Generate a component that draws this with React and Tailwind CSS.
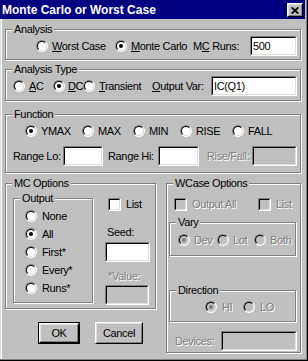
import React from "react";

function Radio({ checked, disabled }) {
  return (
    <span className="relative inline-block w-[12px] h-[12px] shrink-0 rounded-full border border-t-[#808080] border-l-[#808080] border-r-white border-b-white">
      <span
        className={
          disabled
            ? "absolute inset-0 rounded-full border border-t-black border-l-black border-r-[#dfdfdf] border-b-[#dfdfdf] bg-[#c0c0c0]"
            : "absolute inset-0 rounded-full border border-t-black border-l-black border-r-[#dfdfdf] border-b-[#dfdfdf] bg-white"
        }
      ></span>
      {checked && (
        <span
          className={
            disabled
              ? "absolute left-[3px] top-[3px] w-[4px] h-[4px] rounded-full bg-[#808080]"
              : "absolute left-[3px] top-[3px] w-[4px] h-[4px] rounded-full bg-black"
          }
        ></span>
      )}
    </span>
  );
}

function Check({ disabled }) {
  return (
    <span className="inline-block w-[13px] h-[13px] shrink-0 border border-t-[#808080] border-l-[#808080] border-r-white border-b-white">
      <span
        className={
          disabled
            ? "block w-full h-full border border-t-black border-l-black border-r-[#dfdfdf] border-b-[#dfdfdf] bg-[#c0c0c0]"
            : "block w-full h-full border border-t-black border-l-black border-r-[#dfdfdf] border-b-[#dfdfdf] bg-white"
        }
      ></span>
    </span>
  );
}

function Field({ className, value, disabled }) {
  return (
    <div
      className={
        "h-[20px] shrink-0 border border-t-[#808080] border-l-[#808080] border-r-white border-b-white " +
        className
      }
    >
      <div
        className={
          disabled
            ? "h-full border border-t-black border-l-black border-r-[#dfdfdf] border-b-[#dfdfdf] bg-[#c0c0c0]"
            : "h-full border border-t-black border-l-black border-r-[#dfdfdf] border-b-[#dfdfdf] bg-white pl-[1px] leading-[16px] whitespace-nowrap"
        }
      >
        {value}
      </div>
    </div>
  );
}

function Group({ label, className, children }) {
  return (
    <div
      className={
        "relative shrink-0 border border-[#808080] shadow-[1px_1px_0_#fff,inset_1px_1px_0_#fff] " +
        className
      }
    >
      <span className="absolute left-[6px] -top-[7px] px-[2px] bg-[#c0c0c0] leading-[13px] whitespace-nowrap">
        {label}
      </span>
      {children}
    </div>
  );
}

const dis = "text-[#808080] [text-shadow:1px_1px_0_#fff] whitespace-nowrap";

function Button({ children, isDefault, className }) {
  const inner = (
    <div className="h-full border border-t-white border-l-white border-r-black border-b-black">
      <div className="h-full flex items-center justify-center border border-t-[#dfdfdf] border-l-[#dfdfdf] border-r-[#808080] border-b-[#808080]">
        {children}
      </div>
    </div>
  );
  if (isDefault) {
    return <div className={"border border-black " + className}>{inner}</div>;
  }
  return <div className={className}>{inner}</div>;
}

export default function App() {
  return (
    <div className="w-[308px] h-[361px] overflow-hidden bg-[#c0c0c0] border-r border-b border-r-black border-b-black font-['Liberation_Sans',Arial,sans-serif] text-[11px] tracking-[-0.35px] text-black leading-[13px]">
      <div className="h-full flex flex-col border-r border-b border-r-[#808080] border-b-[#808080]">
        <div className="h-[19px] mr-[1px] shrink-0 bg-[#000080] flex items-start justify-between pl-[2px] pr-[2px]">
          <span className="pt-[4px] text-white font-bold text-[12px] tracking-normal leading-[13px] whitespace-nowrap">
            Monte Carlo or Worst Case
          </span>
          <div className="mt-[3px] w-[16px] h-[14px] border border-t-white border-l-white border-r-black border-b-black">
            <div className="h-full flex items-center justify-center border border-t-[#dfdfdf] border-l-[#dfdfdf] border-r-[#808080] border-b-[#808080] bg-[#c0c0c0]">
              <svg width="8" height="7" viewBox="0 0 8 7">
                <path d="M0.6 0.4 L7.4 6.6 M7.4 0.4 L0.6 6.6" stroke="black" strokeWidth="1.8" />
              </svg>
            </div>
          </div>
        </div>

        <div className="flex-1 border-l border-l-[#dfdfdf]">
          <div className="h-full border-l border-l-white pl-[3px] flex flex-col">
            <Group label="Analysis" className="mt-[10px] w-[296px] h-[31px]">
              <div className="mt-[6px] h-[20px] pl-[30px] flex items-center">
                <div className="w-[79px] flex items-center">
                  <Radio />
                  <span className="ml-[4px] whitespace-nowrap">
                    <u>W</u>orst Case
                  </span>
                </div>
                <div className="w-[78px] flex items-center">
                  <Radio checked />
                  <span className="ml-[4px] whitespace-nowrap">
                    <u>M</u>onte Carlo
                  </span>
                </div>
                <span className="w-[57px] whitespace-nowrap">
                  M<u>C</u> Runs:
                </span>
                <Field className="w-[47px]" value="500" />
              </div>
            </Group>

            <Group label="Analysis Type" className="mt-[9px] w-[296px] h-[32px]">
              <div className="mt-[6px] h-[20px] pl-[7px] flex items-center">
                <div className="w-[40px] flex items-center">
                  <Radio />
                  <span className="ml-[4px]">
                    <u>A</u>C
                  </span>
                </div>
                <div className="w-[30px] flex items-center">
                  <Radio checked />
                  <span className="ml-[3px] whitespace-nowrap">
                    <u>D</u>C
                  </span>
                </div>
                <div className="w-[69px] flex items-center">
                  <Radio />
                  <span className="ml-[4px]">
                    <u>T</u>ransient
                  </span>
                </div>
                <span className="w-[59px] whitespace-nowrap">
                  <u>O</u>utput Var:
                </span>
                <Field className="w-[86px]" value="IC(Q1)" />
              </div>
            </Group>

            <Group label="Function" className="mt-[13px] w-[296px] h-[59px]">
              <div className="mt-[10px] h-[12px] pl-[19px] flex items-center">
                <div className="w-[57px] flex items-center">
                  <Radio checked />
                  <span className="ml-[4px]">YMAX</span>
                </div>
                <div className="w-[51px] flex items-center">
                  <Radio />
                  <span className="ml-[4px]">MAX</span>
                </div>
                <div className="w-[47px] flex items-center">
                  <Radio />
                  <span className="ml-[4px]">MIN</span>
                </div>
                <div className="w-[52px] flex items-center">
                  <Radio />
                  <span className="ml-[4px]">RISE</span>
                </div>
                <div className="flex items-center">
                  <Radio />
                  <span className="ml-[4px]">FALL</span>
                </div>
              </div>
              <div className="mt-[9px] h-[20px] pl-[7px] flex items-center">
                <span className="w-[50px] whitespace-nowrap">Range Lo:</span>
                <Field className="w-[40px]" value="" />
                <span className="ml-[5px] w-[50px] whitespace-nowrap">Range Hi:</span>
                <Field className="w-[41px]" value="" />
                <span className={"ml-[8px] w-[45px] " + dis}>Rise/Fall:</span>
                <Field className="w-[45px]" value="" disabled />
              </div>
            </Group>

            <div className="mt-[10px] flex items-start">
              <div className="flex flex-col">
                <Group label="MC Options" className="w-[151px] h-[126px]">
                  <div className="mt-[14px] pl-[7px] flex items-start">
                    <Group label="Output" className="w-[80px] h-[105px]">
                      <div className="mt-[8px] pl-[11px] flex flex-col">
                        <div className="h-[18px] flex items-center">
                          <Radio />
                          <span className="ml-[5px]">None</span>
                        </div>
                        <div className="h-[18px] flex items-center">
                          <Radio checked />
                          <span className="ml-[5px]">All</span>
                        </div>
                        <div className="h-[18px] flex items-center">
                          <Radio />
                          <span className="ml-[5px]">First*</span>
                        </div>
                        <div className="h-[18px] flex items-center">
                          <Radio />
                          <span className="ml-[5px]">Every*</span>
                        </div>
                        <div className="h-[18px] flex items-center">
                          <Radio />
                          <span className="ml-[5px]">Runs*</span>
                        </div>
                      </div>
                    </Group>
                    <div className="ml-[12px] flex flex-col">
                      <div className="h-[13px] pl-[3px] flex items-center">
                        <Check />
                        <span className="ml-[5px]">List</span>
                      </div>
                      <span className="mt-[15px] pl-[2px]">Seed:</span>
                      <Field className="mt-[3px] w-[45px]" value="" />
                      <span className={"mt-[8px] pl-[3px] " + dis}>*Value:</span>
                      <Field className="mt-[2px] w-[44px]" value="" disabled />
                    </div>
                  </div>
                </Group>
                <div className="mt-[13px] pl-[33px] flex items-start">
                  <Button isDefault className="w-[42px] h-[22px]">
                    OK
                  </Button>
                  <Button className="ml-[15px] w-[48px] h-[22px]">Cancel</Button>
                </div>
              </div>

              <Group label="WCase Options" className="ml-[10px] w-[135px] h-[170px]">
                <div className="mt-[14px] h-[13px] pl-[7px] flex items-center">
                  <div className="w-[84px] flex items-center">
                    <Check disabled />
                    <span className={"ml-[5px] " + dis}>Output All</span>
                  </div>
                  <div className="flex items-center">
                    <Check disabled />
                    <span className={"ml-[5px] " + dis}>List</span>
                  </div>
                </div>
                <Group label="Vary" className="mt-[11px] ml-[2px] w-[127px] h-[34px]">
                  <div className="mt-[11px] h-[12px] pl-[8px] flex items-center">
                    <div className="w-[39px] flex items-center">
                      <Radio checked disabled />
                      <span className={"ml-[4px] " + dis}>Dev</span>
                    </div>
                    <div className="w-[37px] flex items-center">
                      <Radio disabled />
                      <span className={"ml-[4px] " + dis}>Lot</span>
                    </div>
                    <div className="flex items-center">
                      <Radio disabled />
                      <span className={"ml-[4px] " + dis}>Both</span>
                    </div>
                  </div>
                </Group>
                <Group label="Direction" className="mt-[34px] ml-[2px] w-[127px] h-[32px]">
                  <div className="mt-[10px] h-[12px] pl-[35px] flex items-center">
                    <div className="w-[38px] flex items-center">
                      <Radio checked disabled />
                      <span className={"ml-[5px] " + dis}>HI</span>
                    </div>
                    <div className="flex items-center">
                      <Radio disabled />
                      <span className={"ml-[5px] " + dis}>LO</span>
                    </div>
                  </div>
                </Group>
                <div className="mt-[9px] h-[20px] pl-[8px] flex items-center">
                  <span className={"w-[46px] " + dis}>Devices:</span>
                  <Field className="w-[76px]" value="" disabled />
                </div>
              </Group>
            </div>
          </div>
        </div>
      </div>
    </div>
  );
}
